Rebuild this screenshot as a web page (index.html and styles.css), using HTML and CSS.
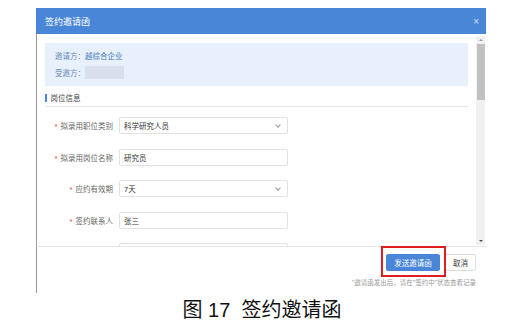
FILE: index.html
```html
<!DOCTYPE html>
<html lang="zh-CN">
<head>
    <meta charset="UTF-8">
    <title>签约邀请函</title>
    <link rel="stylesheet" href="styles.css">
</head>
<body>
    <div class="dialog">
        <div class="dialog-header">
            <span class="dialog-title">签约邀请函</span>
            <span class="dialog-close">×</span>
        </div>

        <div class="dialog-body">
            <div class="content">
                <div class="info-box">
                    <div class="info-row">邀请方：<span class="info-value">越综合企业</span></div>
                    <div class="info-row">受邀方：<span class="info-blank"></span></div>
                </div>

                <div class="section-title">岗位信息</div>

                <div class="form-row first">
                    <label class="form-label"><i>*</i>拟录用职位类别</label>
                    <div class="form-input select">科学研究人员<span class="arrow"></span></div>
                </div>
                <div class="form-row">
                    <label class="form-label"><i>*</i>拟录用岗位名称</label>
                    <div class="form-input">研究员</div>
                </div>
                <div class="form-row">
                    <label class="form-label"><i>*</i>应约有效期</label>
                    <div class="form-input select">7天<span class="arrow"></span></div>
                </div>
                <div class="form-row">
                    <label class="form-label"><i>*</i>签约联系人</label>
                    <div class="form-input">张三</div>
                </div>
                <div class="form-row">
                    <label class="form-label"><i>*</i>联系电话</label>
                    <div class="form-input"></div>
                </div>
            </div>
            <div class="scrollbar">
                <span class="scroll-up"></span>
                <div class="scroll-track"><div class="scroll-thumb"></div></div>
                <span class="scroll-down"></span>
            </div>
        </div>

        <div class="dialog-footer">
            <div class="buttons">
                <button class="btn btn-primary">发送邀请函</button>
                <button class="btn">取消</button>
                <div class="highlight"></div>
            </div>
            <p class="note">"邀请函发出后，请在"签约中"状态查看记录</p>
        </div>
    </div>

    <p class="caption">图 17&nbsp;&nbsp;签约邀请函</p>
</body>
</html>
```

FILE: styles.css
```css
body {
    margin: 0;
    background: #fff;
    font-family: "Liberation Sans", "Noto Sans CJK SC", sans-serif;
    color: #333;
}
.dialog {
    width: 450px;
    margin: 8px 0 0 36px;
}
.dialog-header {
    height: 26px;
    background: #4a86d8;
    color: #fff;
    display: flex;
    align-items: center;
    justify-content: space-between;
    padding: 0 9px;
}
.dialog-title {
    font-size: 9px;
}
.dialog-close {
    font-size: 10px;
    color: #d4e3f7;
    margin-right: -2px;
}
.dialog-body {
    display: flex;
    height: 212px;
    border-left: 1px solid #9a9a9a;
}
.content {
    flex: 1;
    padding: 9px 8px 0 8px;
    overflow: hidden;
}
.info-box {
    background: #e8f1fb;
    height: 43px;
    padding: 4px 0 0 10px;
    box-sizing: border-box;
    font-size: 7.5px;
    color: #6b8ab8;
}
.info-row {
    height: 17px;
    display: flex;
    align-items: center;
}
.info-value {
    color: #4a7ab8;
}
.info-blank {
    display: inline-block;
    width: 39px;
    height: 13px;
    background: #d8e0ec;
}
.section-title {
    margin-top: 4px;
    height: 15px;
    border-bottom: 1px solid #e6e6e6;
    font-size: 7.5px;
    color: #444;
    display: flex;
    align-items: center;
    padding-bottom: 1px;
}
.section-title::before {
    content: "";
    width: 1.5px;
    height: 8px;
    background: #4a86d8;
    margin-right: 4px;
}
.form-row {
    display: flex;
    align-items: center;
    height: 17px;
    margin-top: 14.5px;
}
.form-row.first {
    margin-top: 10px;
}
.form-label {
    width: 68px;
    text-align: right;
    font-size: 7.5px;
    color: #666;
    margin-right: 6px;
}
.form-label i {
    font-style: normal;
    color: #e04a3a;
    margin-right: 3px;
}
.form-input {
    width: 169px;
    height: 17px;
    box-sizing: border-box;
    border: 1px solid #e2e2e2;
    border-radius: 2px;
    font-size: 7.5px;
    color: #333;
    padding-left: 4px;
    display: flex;
    align-items: center;
    position: relative;
}
.arrow {
    position: absolute;
    right: 7px;
    top: 5px;
    width: 3px;
    height: 3px;
    border-right: 1px solid #999;
    border-bottom: 1px solid #999;
    transform: rotate(45deg);
}
.scrollbar {
    width: 9px;
    margin: 2px 1px 1px 0;
    background: #f1f1f1;
    display: flex;
    flex-direction: column;
    align-items: center;
}
.scroll-up, .scroll-down {
    width: 0;
    height: 0;
    border-left: 2.5px solid transparent;
    border-right: 2.5px solid transparent;
    margin: 3px 0;
}
.scroll-up {
    border-bottom: 2.5px solid #a0a0a0;
}
.scroll-down {
    border-top: 2.5px solid #505050;
}
.scroll-track {
    flex: 1;
    width: 100%;
}
.scroll-thumb {
    margin: 0 auto;
    width: 8px;
    height: 56px;
    background: #c1c1c1;
}
.dialog-footer {
    height: 47px;
    border-top: 1px solid #e6e6e6;
    border-left: 1px solid #9a9a9a;
    box-sizing: border-box;
    padding: 7px 10px 0 0;
}
.buttons {
    display: flex;
    justify-content: flex-end;
    gap: 5px;
    position: relative;
}
.btn {
    height: 17px;
    padding: 0;
    width: 31px;
    border: 1px solid #dedede;
    border-radius: 2px;
    background: #fff;
    font-family: inherit;
    font-size: 7.5px;
    color: #333;
}
.btn-primary {
    width: 54px;
    border-color: #4a86d8;
    background: #4a86d8;
    color: #fff;
}
.highlight {
    position: absolute;
    right: 30px;
    top: -8px;
    width: 65px;
    height: 31px;
    box-sizing: border-box;
    border: 2px solid #e01e1e;
}
.note {
    margin: 6px 0 0;
    text-align: right;
    font-size: 6.5px;
    color: #999;
}
.caption {
    margin: 1px 0 0;
    text-align: center;
    font-size: 20px;
    color: #111;
    padding-left: 6px;
}
```
